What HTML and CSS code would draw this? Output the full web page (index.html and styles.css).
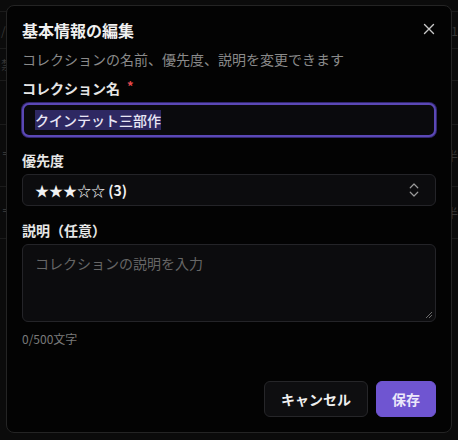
FILE: index.html
```html
<!DOCTYPE html>
<html lang="ja">
<head>
<meta charset="utf-8">
<title>基本情報の編集</title>
<link rel="stylesheet" href="styles.css">
</head>
<body>
<div class="backdrop">
  <div class="brow r1"><span></span><span></span></div>
  <div class="brow r2"><span>/</span><span>1</span></div>
  <div class="brow r3"><span>禁</span><span></span></div>
  <div class="brow r4"><span></span><span></span></div>
  <div class="brow r5"><span>〒</span><span>半</span></div>
  <div class="brow r6"><span>〒</span><span>半</span></div>
</div>

<div class="dialog" role="dialog">
  <div class="head">
    <h2 class="title">基本情報の編集</h2>
    <button class="close" aria-label="閉じる">
      <svg width="12" height="12" viewBox="0 0 12 12"><path d="M1.5 1.5l9 9M10.5 1.5l-9 9" stroke="#c8c8c8" stroke-width="1.4" stroke-linecap="round" fill="none"/></svg>
    </button>
  </div>
  <p class="desc">コレクションの名前、優先度、説明を変更できます</p>

  <label class="label first">コレクション名<span class="req">*</span></label>
  <div class="input focused"><span class="sel">クインテット三部作</span></div>

  <label class="label l2">優先度</label>
  <div class="select">
    <span class="stars">★★★☆☆ <b>(3)</b></span>
    <svg width="18" height="18" viewBox="0 0 24 24" fill="none" stroke="#9a9a9a" stroke-width="1.6" stroke-linecap="round" stroke-linejoin="round"><path d="m7 15 5 5 5-5"/><path d="m7 9 5-5 5 5"/></svg>
  </div>

  <label class="label l3">説明（任意）</label>
  <div class="textarea">
    <span class="ph">コレクションの説明を入力</span>
    <svg class="grip" width="8" height="8" viewBox="0 0 8 8"><path d="M7 1L1 7M7 4L4 7" stroke="#777" stroke-width="0.9"/></svg>
  </div>
  <div class="count">0/500文字</div>

  <div class="footer">
    <button class="btn cancel">キャンセル</button>
    <button class="btn save">保存</button>
  </div>
</div>
</body>
</html>
```

FILE: styles.css
```css
* { box-sizing: border-box; }
html, body { margin: 0; padding: 0; }
body {
  width: 458px;
  height: 440px;
  background: #0b0b0b;
  font-family: "Noto Sans CJK JP", "Noto Sans", sans-serif;
  color: #ececec;
  position: relative;
  overflow: hidden;
}

.backdrop { width: 100%; }
.brow {
  display: flex;
  justify-content: space-between;
  align-items: center;
  border-bottom: 1px solid #1b1b1b;
  font-size: 12px;
  color: #363636;
  padding: 0 0 0 1px;
}
.brow span { width: 12px; text-align: right; }
.brow span:first-child { text-align: left; }
.r1 { height: 12px; }
.r2 { height: 37px; }
.r3 { height: 32px; }
.r4 { height: 44px; }
.r5 { height: 62px; }
.r6 { height: 52px; }

.dialog {
  position: absolute;
  left: 6px;
  top: 5px;
  width: 446px;
  height: 428px;
  background: #030303;
  border: 1px solid #242424;
  border-radius: 8px;
  padding: 12px 15px 15px;
  display: flex;
  flex-direction: column;
}

.head {
  display: flex;
  justify-content: space-between;
  align-items: center;
  height: 24px;
}
.title {
  margin: 0;
  font-size: 16px;
  line-height: 24px;
  font-weight: 700;
  color: #f0f0f0;
}
.close {
  background: none;
  border: 0;
  padding: 0;
  width: 12px;
  height: 12px;
  margin-right: 1px;
  margin-top: -2px;
  display: flex;
}

.desc {
  margin: 7px 0 0;
  font-size: 14px;
  line-height: 20px;
  color: #8a8a8a;
}

.label {
  display: block;
  font-size: 14px;
  line-height: 20px;
  font-weight: 700;
  color: #e6e6e6;
}
.label.first { margin-top: 9px; }
.label.l2 { margin-top: 13px; }
.label.l3 { margin-top: 14px; }
.req {
  color: #e5484d;
  margin-left: 7px;
  font-size: 13px;
  position: relative;
  top: -3px;
}

.input {
  margin-top: 4px;
  height: 34px;
  border-radius: 7px;
  background: #0a0a0d;
  display: flex;
  align-items: center;
  padding: 0 11px;
  font-size: 14px;
}
.input.focused {
  border: 2px solid #5b48b6;
  box-shadow: 0 0 0 1px #33286f;
}
.sel {
  background: #2e2862;
  color: #e9e6f5;
  font-weight: 500;
  line-height: 20px;
}

.select {
  margin-top: 4px;
  height: 32px;
  border: 1px solid #242428;
  border-radius: 6px;
  background: #0c0c0e;
  display: flex;
  align-items: center;
  justify-content: space-between;
  padding: 0 12px 0 12px;
}
.stars {
  font-size: 14px;
  line-height: 20px;
  color: #f2f2f2;
  font-weight: 500;
}
.stars b { font-weight: 600; }

.textarea {
  margin-top: 4px;
  height: 78px;
  border: 1px solid #242428;
  border-radius: 6px;
  background: #0c0c0e;
  padding: 5px 12px;
  position: relative;
}
.ph {
  font-size: 14px;
  line-height: 20px;
  color: #666;
}
.grip {
  position: absolute;
  right: 2px;
  bottom: 2px;
}

.count {
  margin-top: 9px;
  font-size: 12px;
  line-height: 16px;
  color: #7a7a7a;
}

.footer {
  margin-top: auto;
  display: flex;
  justify-content: flex-end;
  gap: 8px;
}
.btn {
  height: 36px;
  border-radius: 6px;
  font-family: "Noto Sans CJK JP", "Noto Sans", sans-serif;
  font-size: 14px;
  font-weight: 700;
  padding: 0 16px;
  line-height: 20px;
}
.cancel {
  background: #0e0e10;
  border: 1px solid #262629;
  color: #efefef;
}
.save {
  background: #6f55d1;
  border: 1px solid #6f55d1;
  color: #ece8fa;
  padding: 0 15px;
}
```
